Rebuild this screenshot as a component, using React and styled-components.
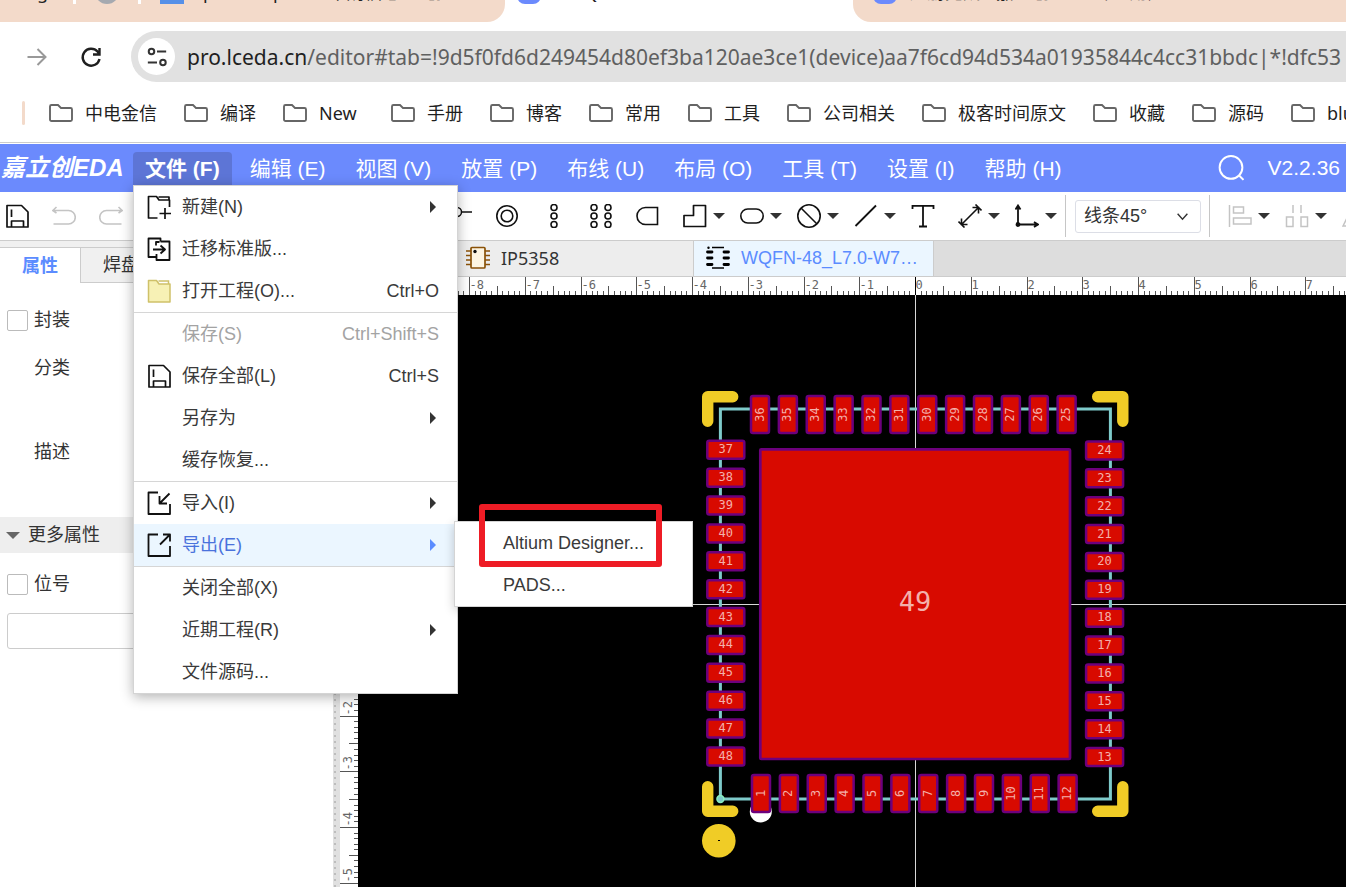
import React, { useEffect, useState } from 'react';
import styled, { createGlobalStyle, css } from 'styled-components';

const UI = '"Liberation Sans", "Noto Sans CJK SC", sans-serif';
const SYSTEM = '"Noto Sans", "Noto Sans CJK SC", sans-serif';

const Global = createGlobalStyle`
  *, *::before, *::after { box-sizing: border-box; }
  html, body, #root { height: 100%; }
  body { margin: 0; overflow: hidden; background: #fff; color: #333; font: 18px/24px ${UI}; }
  button { margin: 0; padding: 0; border: 0; background: none; color: inherit; font: inherit; text-align: left; }
  svg { display: block; flex: none; }
`;

const Page = styled.div`
  display: flex;
  flex-direction: column;
  height: 100vh;
  overflow: hidden;
`;

/* ---------- browser chrome ---------- */

const TabStrip = styled.div`
  display: flex;
  flex: none;
  height: 22px;
  overflow: hidden;
  font-family: ${SYSTEM};
  color: #222;
`;

const BrowserTab = styled.div`
  display: flex;
  align-items: flex-end;
  gap: ${(p) => p.$gap || '12px'};
  overflow: hidden;
  white-space: nowrap;
  padding: 0 0 18px ${(p) => p.$inset || '12px'};
  flex: ${(p) => p.$grow || '0 0 auto'};
  width: ${(p) => p.$width || 'auto'};
  background: ${(p) => (p.$active ? '#fff' : '#f3daca')};
  border-radius: ${(p) => p.$radius || '0'};
`;

const TabTitle = styled.span`
  line-height: 24px;
  text-align: ${(p) => (p.$width ? 'right' : 'left')};
  padding-right: ${(p) => (p.$width ? '6px' : '0')};
  width: ${(p) => p.$width || 'auto'};
`;

const TabMark = styled.span`
  width: ${(p) => p.$width || '24px'};
  height: 24px;
  flex: none;
  background: ${(p) => p.$color};
  border-radius: ${(p) => p.$round || '0'};
`;

const AddressBar = styled.div`
  display: flex;
  flex: none;
  align-items: center;
  gap: 26px;
  height: 69px;
  padding-left: 23px;
`;

const NavButton = styled.button`
  display: flex;
  justify-content: center;
  width: 28px;
  color: ${(p) => (p.$muted ? '#999' : '#1f1f1f')};
`;

const Omnibox = styled.div`
  display: flex;
  flex: 1;
  min-width: 0;
  align-items: center;
  gap: 12px;
  height: 51px;
  padding-left: 7px;
  border-radius: 26px 0 0 26px;
  background: #e1e1e1;
  overflow: hidden;
`;

const SiteInfo = styled.button`
  display: flex;
  flex: none;
  align-items: center;
  justify-content: center;
  width: 37px;
  height: 37px;
  border-radius: 50%;
  background: #fff;
`;

const Url = styled.div`
  flex: 1;
  font: 21px/28px ${SYSTEM};
  color: #5f6060;
  white-space: nowrap;
  b { color: #1f1f1f; font-weight: 400; }
`;

const Bookmarks = styled.nav`
  display: flex;
  flex: none;
  align-items: center;
  gap: 27px;
  height: 52px;
  padding: 0 0 8px 22px;
  border-bottom: 1px solid #ccc;
  margin-bottom: 1px;
  overflow: hidden;
  font-family: ${SYSTEM};
`;

const BookmarkBar = styled.span`
  flex: none;
  width: 3px;
  height: 24px;
  border-radius: 2px;
  background: #f3daca;
  margin-right: -3px;
`;

const Bookmark = styled.a`
  display: flex;
  flex: none;
  gap: 12px;
  align-items: center;
  color: #1f1f1f;
  text-decoration: none;
  span { min-width: 45px; }
  span:lang(zh) { min-width: 0; }
`;

/* ---------- application header ---------- */

const MenuBar = styled.header`
  display: flex;
  flex: none;
  align-items: center;
  height: 48px;
  padding-right: 6px;
  background: #6b8afd;
  color: #fff;
  font-size: 21px;
  position: relative;
  z-index: 5;
`;

const Logo = styled.div`
  width: 133px;
  padding-left: 1px;
  font: italic 700 24px/28px ${UI};
  white-space: nowrap;
`;

const MenuList = styled.nav`
  display: flex;
  gap: 6px;
  flex: 1;
`;

const MenuSlot = styled.div`
  position: relative;
`;

const MenuTitle = styled.button`
  height: 33px;
  padding: 0 12px;
  line-height: 33px;
  white-space: nowrap;
  border-radius: 4px 4px 0 0;
  ${(p) => p.$open && css`background: #5d75d6; font-weight: 700;`}
`;

const Version = styled.span`
  margin-left: 24px;
`;

const Dropdown = styled.div`
  position: absolute;
  top: 100%;
  left: 0;
  width: 325px;
  background: #fff;
  color: #333;
  border: 1px solid #d4d4d4;
  box-shadow: 0 3px 12px rgba(0, 0, 0, 0.3);
  font-size: 18px;
`;

const Divider = styled.div`
  height: 1px;
  background: #d6d6d6;
`;

const ItemSlot = styled.div`
  position: relative;
`;

const MenuItem = styled.button`
  display: flex;
  align-items: center;
  gap: 11px;
  width: 100%;
  height: 42px;
  padding: 0 18px 0 13px;
  white-space: nowrap;
  color: ${(p) => (p.$disabled ? '#a3a3a3' : p.$active ? '#4a72dc' : '#3a3a3a')};
  background: ${(p) => (p.$active ? '#ebf6ff' : 'transparent')};
`;

const IconSlot = styled.span`
  width: 24px;
  height: 24px;
  flex: none;
  color: #111;
`;

const ItemLabel = styled.span`
  flex: 1;
`;

const SubArrow = styled.span`
  margin-right: 3px;
  border: 6px solid transparent;
  border-left-color: ${(p) => (p.$active ? '#5b8cff' : '#333')};
  border-right-width: 0;
`;

const Submenu = styled.div`
  position: absolute;
  left: 320px;
  top: -3px;
  width: 239px;
  background: #fff;
  border: 1px solid #d4d4d4;
  box-shadow: 0 3px 10px rgba(0, 0, 0, 0.2);
`;

const Highlight = styled.div`
  position: absolute;
  left: 24px;
  top: -18px;
  width: 183px;
  height: 63px;
  border: 6px solid #ee1c25;
  border-radius: 3px;
  pointer-events: none;
`;

/* ---------- toolbar ---------- */

const Toolbar = styled.div`
  display: flex;
  flex: none;
  align-items: center;
  height: 49px;
  padding-left: 5px;
  border-bottom: 1px solid #ccc;
  overflow: hidden;
`;

const ToolGroup = styled.div`
  display: flex;
  flex: none;
  align-items: center;
  padding-left: ${(p) => p.$inset || '0'};
`;

const Tool = styled.button`
  display: flex;
  align-items: center;
  gap: 6px;
  margin-right: ${(p) => (p.$drop ? '15px' : '23px')};
  color: ${(p) => (p.$muted ? '#c4c4c4' : '#111')};
  ${(p) => p.$last && css`margin-right: 0;`}
`;

const Caret = styled.span`
  border: 6px solid transparent;
  border-top-color: #333;
  border-bottom-width: 0;
`;

const ToolRule = styled.span`
  flex: none;
  width: 1px;
  height: 42px;
  margin: 0 9px 0 8px;
  background: #c6c6c6;
`;

const SelectBox = styled.label`
  position: relative;
  display: block;
  flex: none;
  svg { position: absolute; right: 12px; top: 10px; pointer-events: none; }
`;

const Select = styled.select`
  appearance: none;
  width: 126px;
  height: 33px;
  padding: 0 8px;
  border: 1px solid #dcdee6;
  border-radius: 3px;
  background: #fff;
  color: #333;
  font: 18px/24px ${UI};
`;

/* ---------- workspace ---------- */

const Workspace = styled.div`
  display: flex;
  flex: 1;
  min-height: 0;
`;

const SidePanel = styled.aside`
  flex: none;
  width: 333px;
  padding-top: 6px;
  background: linear-gradient(#f0f0f0 6px, #fff 6px);
`;

const PanelTabs = styled.div`
  display: flex;
  height: 36px;
  border-top: 1px solid #ccc;
`;

const PanelTab = styled.button`
  padding: 0 22px;
  white-space: nowrap;
  ${(p) =>
    p.$active
      ? css`width: 81px; border-right: 1px solid #ccc; color: #5b8cff; font-weight: 700;`
      : css`flex: 1; background: #f0f0f0; border-bottom: 1px solid #ccc;`}
`;

const PanelBody = styled.div`
  padding-top: 13px;
`;

const Field = styled.div`
  display: flex;
  align-items: center;
  height: ${(p) => (p.$tall ? '120px' : '48px')};
  padding-left: ${(p) => (p.$indent ? '34px' : '7px')};
  label { display: flex; align-items: center; gap: 6px; }
`;

const Check = styled.input`
  appearance: none;
  width: 21px;
  height: 21px;
  margin: 0;
  border: 1px solid #bbb;
  border-radius: 2px;
  background: #fff;
`;

const Section = styled.button`
  display: flex;
  align-items: center;
  gap: 8px;
  width: 100%;
  height: 36px;
  margin: 5px 0 7px;
  padding-left: 6px;
  background: #eee;
`;

const SectionCaret = styled.span`
  border: 7px solid transparent;
  border-top-color: #666;
  border-bottom-width: 0;
`;

const TextBox = styled.input`
  display: block;
  width: 300px;
  height: 36px;
  margin: 5px 0 0 7px;
  border: 1px solid #ccc;
  border-radius: 3px;
`;

const Splitter = styled.div`
  flex: none;
  width: 7px;
  background: radial-gradient(circle at 2px 3px, #bdbdbd 1px, transparent 1px) 0 0 / 7px 6px #e0e0e0;
`;

const Editor = styled.main`
  flex: 1;
  min-width: 0;
  display: grid;
  grid-template-columns: 18px minmax(0, 1fr);
  grid-template-rows: 36px 18px minmax(0, 1fr);
`;

const DocTabs = styled.div`
  grid-column: 1 / -1;
  display: flex;
  background: #ddd;
  border-bottom: 1px solid #ccc;
`;

const DocTab = styled.button`
  display: flex;
  flex: none;
  align-items: center;
  gap: 11px;
  width: ${(p) => (p.$home ? '114px' : '240px')};
  padding: 0 12px 2px;
  border-right: 1px solid #ccc;
  background: ${(p) => (p.$active ? '#ebf6ff' : '#ededed')};
  color: ${(p) => (p.$active ? '#5b8cff' : '#333')};
  font-family: ${(p) => (p.$active ? UI : SYSTEM)};
  white-space: nowrap;
`;

const Corner = styled.div`
  background: #fff;
`;

const RulerSvg = styled.svg`
  width: 100%;
  height: 100%;
  background: #fff;
  text { font: 12px "DejaVu Sans Mono", monospace; fill: #666; }
`;

const Board = styled.svg`
  width: 100%;
  height: 100%;
  background: #000;
  text { font: 12px "DejaVu Sans Mono", monospace; fill: #f3b0ab; text-anchor: middle; }
  text.thermal { font-size: 27px; }
`;

/* ---------- icons ---------- */

const Icon = ({ children, w = 1.5, size = 24, ...rest }) => (
  <svg width={size} height={size} viewBox="0 0 24 24" fill="none" stroke="currentColor" strokeWidth={w} {...rest}>
    {children}
  </svg>
);

const SaveIcon = () => (
  <Icon w={1.7}>
    <path d="M2 1.5H16.500L23 8V23H2Z M6.500 5.500V13 M6.500 23V17H18.500V23" strokeLinejoin="round" />
  </Icon>
);
const UndoIcon = () => (
  <Icon w={1.6}><path d="M4.500 3L0.800 6.500L4.500 9 M1 6.500H16.500A6.700 6.700 0 0 1 16.500 20H1.500" /></Icon>
);
const RedoIcon = () => (
  <Icon w={1.6}><path d="M19.500 3L23.200 6.500L19.500 9 M23 6.500H7.500A6.700 6.700 0 0 0 7.500 20H22.500" /></Icon>
);
const ZoomIcon = () => (
  <Icon><circle cx="11" cy="11" r="8" /><path d="M17 17L22 22" /></Icon>
);
const PinIcon = () => (
  <Icon><circle cx="9" cy="8" r="4.500" /><path d="M13.500 8H24" /></Icon>
);
const PadIcon = () => (
  <Icon w={1.6}><circle cx="12" cy="12" r="10.200" /><circle cx="12" cy="12" r="5.800" /></Icon>
);
const ColumnIcon = () => (
  <Icon w={1.6}><circle cx="12" cy="3.500" r="3" /><circle cx="12" cy="12" r="3" /><circle cx="12" cy="20.500" r="3" /></Icon>
);
const GridPadIcon = () => (
  <Icon w={1.6}>
    {[5, 19].map((x) => [3.5, 12, 20.5].map((y) => <circle key={`${x}-${y}`} cx={x} cy={y} r="3" />))}
  </Icon>
);
const RegionIcon = () => (
  <Icon w={1.6}><path d="M21.500 3.500H9.500A8.500 8.500 0 0 0 9.500 20.500H21.500Z" /></Icon>
);
const PolyIcon = () => (
  <Icon w={1.7}><path d="M1 22.500V11.500H10.500V1.500H22.500V22.500Z" strokeLinejoin="round" /></Icon>
);
const OvalIcon = () => (
  <Icon w={1.6}><rect x="0.800" y="5" width="22.400" height="14" rx="7" /></Icon>
);
const ForbidIcon = () => (
  <Icon w={1.6}><circle cx="12" cy="12" r="11.200" /><path d="M4 4L20 20" /></Icon>
);
const LineIcon = () => (
  <Icon w={1.8}><path d="M1.500 22L22 1.500" /></Icon>
);
const TextIcon = () => (
  <Icon w={1.8}><path d="M1.500 5V1.800H22.500V5 M12 2V22.500 M8 22.500H16" /></Icon>
);
const DimensionIcon = () => (
  <Icon w={1.6}>
    <path d="M3 21L21 3 M14.500 3.500L20.500 3.500L20.500 9.500 M9.500 20.500H3.500V14.500 M17.500 0.500L23.500 6.500 M0.500 17.500L6.500 23.500" />
  </Icon>
);
const AxisIcon = () => (
  <Icon w={1.8}>
    <path d="M3 21V2 M0.500 5.500L3 1.500L5.500 5.500 M3 20.500H22 M19 18L23 20.500L19 23" />
    <circle cx="3" cy="20.500" r="1.500" fill="currentColor" />
  </Icon>
);
const AlignIcon = () => (
  <Icon>
    <path d="M1.500 1V23" />
    <rect x="5.500" y="3" width="10" height="6" />
    <rect x="5.500" y="14" width="17.500" height="6" />
  </Icon>
);
const DistributeIcon = () => (
  <Icon>
    <path d="M8 1V9 M16 1V9" />
    <rect x="1.500" y="13" width="6.500" height="9.500" />
    <rect x="16" y="13" width="6.500" height="9.500" />
  </Icon>
);
const MirrorIcon = () => (
  <Icon><path d="M1 22L11 2V22Z" /></Icon>
);
const NewIcon = () => (
  <Icon w={1.7}>
    <path d="M10.500 23H1.500V1.500H9.500L12 5H22.500V12 M11.500 2H22V5 M18 13V24 M12.500 18.500H24" strokeLinejoin="round" />
  </Icon>
);
const MigrateIcon = () => (
  <Icon w={1.8}>
    <path d="M13.500 4.500V1.500H1.500V20H9 M9 8.500V5H12.500M13.500 4.500H22.500V23H9.500V17 M6 12.500H17.500 M13.500 8.500L18 12.500L13.500 16.500" strokeLinejoin="round" />
  </Icon>
);
const OpenIcon = () => (
  <Icon>
    <path d="M1.500 1.500H9.500L12 5H23V23H1.500Z" fill="#f7f1b5" stroke="#cfc169" strokeLinejoin="round" />
    <path d="M11.500 2H21.500V5" stroke="#cfc169" />
  </Icon>
);
const ImportIcon = () => (
  <Icon w={1.8}>
    <path d="M11 1.500H1.500V23H23V13 M22.500 2.500L13 12 M12.500 5V12.500H20" strokeLinejoin="round" />
  </Icon>
);
const ExportIcon = () => (
  <Icon w={1.8}>
    <path d="M11 1.500H1.500V23H23V13 M13 11.500L22.500 2 M16 1.500H23V8.500" strokeLinejoin="round" />
  </Icon>
);
const FolderIcon = () => (
  <svg width="24" height="18" viewBox="0 0 24 18" fill="none" stroke="#666" strokeWidth="1.900">
    <path d="M2.500 1H9L12 4H21.500A1.500 1.500 0 0 1 23 5.500V15.500A1.500 1.500 0 0 1 21.500 17H2.500A1.500 1.500 0 0 1 1 15.500V2.500A1.500 1.500 0 0 1 2.500 1Z" />
  </svg>
);
const ChipIcon = () => (
  <Icon stroke="#8a5208" w={1.7}>
    <rect x="5" y="1.500" width="14" height="20.500" rx="1" fill="#fdf5e2" />
    <path d="M0 5H5 M0 9.500H5 M0 14H5 M0 18.500H5 M19 5H24 M19 9.500H24 M19 14H24 M19 18.500H24" />
    <circle cx="9" cy="5.500" r="1.700" fill="#111" stroke="none" />
  </Icon>
);
const FootprintIcon = () => (
  <Icon stroke="#000">
    <path d="M6 1.500H18 M6 22H18" />
    <path d="M1.500 6H6 M1.500 12H6 M1.500 18.500H6 M18 6H22.500 M18 12H22.500 M18 18.500H22.500" strokeWidth="2.800" strokeLinecap="round" />
    <circle cx="2.500" cy="1.800" r="1.200" fill="#000" stroke="none" />
  </Icon>
);

/* ---------- data ---------- */

const bookmarks = ['中电金信', '编译', 'New', '手册', '博客', '常用', '工具', '公司相关', '极客时间原文', '收藏', '源码', 'blue'];

const menus = ['编辑 (E)', '视图 (V)', '放置 (P)', '布线 (U)', '布局 (O)', '工具 (T)', '设置 (I)', '帮助 (H)'];

const fileMenu = [
  [
    { label: '新建(N)', icon: NewIcon, sub: true },
    { label: '迁移标准版...', icon: MigrateIcon },
    { label: '打开工程(O)...', icon: OpenIcon, keys: 'Ctrl+O' },
  ],
  [
    { label: '保存(S)', keys: 'Ctrl+Shift+S', disabled: true },
    { label: '保存全部(L)', icon: SaveIcon, keys: 'Ctrl+S' },
    { label: '另存为', sub: true },
    { label: '缓存恢复...' },
  ],
  [
    { label: '导入(I)', icon: ImportIcon, sub: true },
    { label: '导出(E)', icon: ExportIcon, sub: true, active: true, children: ['Altium Designer...', 'PADS...'] },
  ],
  [{ label: '关闭全部(X)' }, { label: '近期工程(R)', sub: true }, { label: '文件源码...' }],
];

const tools = [
  { name: '保存', icon: SaveIcon },
  { name: '撤销', icon: UndoIcon, muted: true },
  { name: '重做', icon: RedoIcon, muted: true },
  { name: '缩放', icon: ZoomIcon },
  { name: '选择', icon: ZoomIcon },
  { name: '视图', icon: ZoomIcon },
  { name: '查找', icon: ZoomIcon },
  { name: '网格', icon: ZoomIcon, drop: true },
  { name: '单位', icon: ZoomIcon, drop: true },
  { name: '引脚', icon: PinIcon },
  { name: '焊盘', icon: PadIcon },
  { name: '单列焊盘', icon: ColumnIcon },
  { name: '双列焊盘', icon: GridPadIcon },
  { name: '槽形', icon: RegionIcon },
  { name: '多边形', icon: PolyIcon, drop: true },
  { name: '椭圆', icon: OvalIcon, drop: true },
  { name: '禁止区域', icon: ForbidIcon, drop: true },
  { name: '线条', icon: LineIcon, drop: true },
  { name: '文本', icon: TextIcon },
  { name: '尺寸', icon: DimensionIcon, drop: true },
  { name: '原点', icon: AxisIcon, drop: true, last: true },
];

const alignTools = [
  { name: '对齐', icon: AlignIcon, drop: true, muted: true },
  { name: '分布', icon: DistributeIcon, drop: true, muted: true },
  { name: '翻转', icon: MirrorIcon, muted: true },
];

/* Pixels per ruler unit, and the drawing origin inside the canvas. */
const UNIT = 55.75;
const ORIGIN = { x: 557.5, y: 309.5 };
const PITCH = UNIT / 2;
/* Where the canvas starts in the window. */
const CANVAS = { x: 358, y: 295 };

/* ---------- pieces ---------- */

function useWindowSize() {
  const read = () => ({ width: window.innerWidth, height: window.innerHeight });
  const [size, setSize] = useState(read);
  useEffect(() => {
    const update = () => setSize(read());
    window.addEventListener('resize', update);
    return () => window.removeEventListener('resize', update);
  }, []);
  return size;
}

function ToolButton({ name, icon: Glyph, drop, muted, last }) {
  return (
    <Tool type="button" aria-label={name} $drop={drop} $muted={muted} $last={last}>
      <Glyph />
      {drop && <Caret />}
    </Tool>
  );
}

function FileMenu() {
  return (
    <Dropdown>
      {fileMenu.map((group, g) => (
        <React.Fragment key={g}>
          {g > 0 && <Divider />}
          {group.map((item) => (
            <ItemSlot key={item.label}>
              <MenuItem type="button" $active={item.active} $disabled={item.disabled}>
                <IconSlot>{item.icon && <item.icon />}</IconSlot>
                <ItemLabel>{item.label}</ItemLabel>
                {item.keys && <span>{item.keys}</span>}
                {item.sub && <SubArrow $active={item.active} />}
              </MenuItem>
              {item.children && (
                <Submenu>
                  {item.children.map((c) => (
                    <MenuItem key={c} type="button">
                      <IconSlot />
                      <ItemLabel>{c}</ItemLabel>
                    </MenuItem>
                  ))}
                  <Highlight />
                </Submenu>
              )}
            </ItemSlot>
          ))}
        </React.Fragment>
      ))}
    </Dropdown>
  );
}

const tickSize = (i) => (i % 10 === 0 ? 18 : i % 5 === 0 ? 9 : 4);

function Ruler({ vertical }) {
  const { width, height } = useWindowSize();
  const origin = vertical ? ORIGIN.y : ORIGIN.x;
  const length = vertical ? height - CANVAS.y : width - CANVAS.x;
  const first = Math.ceil((-origin * 10) / UNIT);
  const last = Math.floor(((length - origin) * 10) / UNIT);
  const ticks = [];
  for (let i = first; i <= last; i += 1) {
    const p = Math.floor(origin + (i * UNIT) / 10) + 0.5;
    const n = tickSize(i);
    const value = vertical ? -i / 10 : i / 10;
    ticks.push(
      <g key={i}>
        <path d={vertical ? `M18 ${p}H${18 - n}` : `M${p} 18V${18 - n}`} stroke={i === 0 ? '#000' : '#555'} />
        {i % 10 === 0 && (vertical
          ? <text transform={`translate(12 ${p - 1}) rotate(-90)`}>{value}</text>
          : <text x={p} y="12">{value}</text>)}
      </g>
    );
  }
  return <RulerSvg aria-hidden="true">{ticks}</RulerSvg>;
}

function Pad({ cx, cy, n, upright }) {
  const w = upright ? 20 : 39;
  const h = upright ? 39 : 20;
  return (
    <g>
      <rect x={cx - w / 2 + 1} y={cy - h / 2 + 1} width={w - 2} height={h - 2} rx="2" fill="#d80a00" stroke="#6d007d" strokeWidth="2.500" />
      {upright
        ? <text transform={`translate(${cx + 3.5} ${cy}) rotate(-90)`}>{n}</text>
        : <text x={cx} y={cy + 3.5}>{n}</text>}
    </g>
  );
}

function Footprint() {
  const pads = [];
  for (let i = 0; i < 12; i += 1) {
    pads.push(
      <Pad key={36 - i} n={36 - i} cx={402 + i * PITCH} cy={119.5} upright />,
      <Pad key={1 + i} n={1 + i} cx={403 + i * PITCH} cy={498.5} upright />,
      <Pad key={37 + i} n={37 + i} cx={367.8} cy={154.8 + i * PITCH} />,
      <Pad key={24 - i} n={24 - i} cx={746.6} cy={155.4 + i * PITCH} />
    );
  }
  return (
    <Board role="img" aria-label="WQFN-48">
      <path d={`M${ORIGIN.x} 0V2000 M0 ${ORIGIN.y}H3000`} stroke="#d8d8d8" />
      <rect x="362.400" y="114" width="390" height="390" fill="none" stroke="#7ecaca" strokeWidth="3" />
      <g fill="none" stroke="#f0cc26" strokeWidth="11.400" strokeLinecap="round" strokeLinejoin="round">
        <path d="M349.700 126.300V101.700H374.700" />
        <path d="M739.700 101.700H764.800V126.300" />
        <path d="M349.700 491.700V516.300H374.700" />
        <path d="M739.700 516.300H764.800V491.700" />
      </g>
      <circle cx="360.800" cy="545.700" r="16.800" fill="#f0cc26" />
      <path d="M360 545.500H362" stroke="#000" />
      <circle cx="362.400" cy="504" r="4.200" fill="#8af0c0" />
      <circle cx="362.400" cy="504" r="2.800" fill="#7ecaca" />
      <circle cx="402.800" cy="516.500" r="11" fill="#fff" />
      <rect x="402.300" y="154.300" width="309.700" height="309.700" rx="1" fill="#d80a00" stroke="#6d007d" strokeWidth="2.700" />
      <text className="thermal" x="557" y="316">49</text>
      {pads}
    </Board>
  );
}

export default function App() {
  return (
    <Page>
      <Global />
      <TabStrip>
        <BrowserTab $width="505px" $radius="0 0 18px 0" $gap="19px">
          <TabTitle $width="42px">g</TabTitle>
          <TabMark $width="3px" $color="#fff" />
          <TabMark $color="#a5a9b0" $round="50%" />
          <TabMark $width="3px" $color="#fff" />
          <TabMark $color="#5690e8" />
          <TabTitle>pcb footprint - 采购信心-立创</TabTitle>
        </BrowserTab>
        <BrowserTab $active $width="348px">
          <TabMark $color="#6b8afd" $round="8px" />
          <TabTitle>* WQFN</TabTitle>
        </BrowserTab>
        <BrowserTab $grow="1" $width="0" $radius="0 0 0 18px" $inset="20px">
          <TabMark $color="#6b8afd" $round="8px" />
          <TabTitle>注册完成 - 嘉立创 EDA 专业用户</TabTitle>
        </BrowserTab>
      </TabStrip>

      <AddressBar>
        <NavButton type="button" aria-label="前进" $muted>
          <Icon w={2}><path d="M2.500 12H20.500 M12.500 4L20.500 12L12.500 20" /></Icon>
        </NavButton>
        <NavButton type="button" aria-label="刷新">
          <Icon w={2.4}><path d="M20.500 14A8.500 8.500 0 1 1 18.500 6.500L20.500 9 M20.500 3V9.500H14" /></Icon>
        </NavButton>
        <Omnibox>
          <SiteInfo type="button" aria-label="网站信息">
            <Icon w={2.2} size={22}>
              <circle cx="6" cy="6" r="3" /><path d="M12 6H22 M2 18H12" /><circle cx="18.500" cy="18" r="3" />
            </Icon>
          </SiteInfo>
          <Url>
            <b>pro.lceda.cn</b>/editor#tab=!9d5f0fd6d249454d80ef3ba120ae3ce1(device)aa7f6cd94d534a01935844c4cc31bbdc|*!dfc53
          </Url>
        </Omnibox>
      </AddressBar>

      <Bookmarks>
        <BookmarkBar />
        {bookmarks.map((b) => (
          <Bookmark key={b} href="#">
            <FolderIcon />
            <span lang={/^[A-Za-z]/.test(b) ? 'en' : 'zh'}>{b}</span>
          </Bookmark>
        ))}
      </Bookmarks>

      <MenuBar>
        <Logo>嘉立创EDA</Logo>
        <MenuList>
          <MenuSlot>
            <MenuTitle type="button" $open>文件 (F)</MenuTitle>
            <FileMenu />
          </MenuSlot>
          {menus.map((m) => (
            <MenuTitle key={m} type="button">{m}</MenuTitle>
          ))}
        </MenuList>
        <Icon w={1.8} size={26}><circle cx="12" cy="11.500" r="10.500" /><path d="M19 18.500L23.500 23" /></Icon>
        <Version>V2.2.36</Version>
      </MenuBar>

      <Toolbar>
        <ToolGroup>{tools.map((t) => <ToolButton key={t.name} {...t} />)}</ToolGroup>
        <ToolRule />
        <SelectBox>
          <Select aria-label="布线角度" defaultValue="45">
            <option value="45">线条45°</option>
            <option value="90">线条90°</option>
          </Select>
          <Icon size={13} w={2.6}><path d="M3 7L12 17L21 7" /></Icon>
        </SelectBox>
        <ToolRule />
        <ToolGroup $inset="9px">{alignTools.map((t) => <ToolButton key={t.name} {...t} />)}</ToolGroup>
      </Toolbar>

      <Workspace>
        <SidePanel>
          <PanelTabs>
            <PanelTab type="button" $active>属性</PanelTab>
            <PanelTab type="button">焊盘</PanelTab>
          </PanelTabs>
          <PanelBody>
            <Field><label><Check type="checkbox" />封装</label></Field>
            <Field $indent>分类</Field>
            <Field $indent $tall>描述</Field>
            <Section type="button"><SectionCaret />更多属性</Section>
            <Field><label><Check type="checkbox" />位号</label></Field>
            <TextBox type="text" aria-label="位号" />
          </PanelBody>
        </SidePanel>
        <Splitter />
        <Editor>
          <DocTabs>
            <DocTab type="button" $home aria-label="首页"><ChipIcon /></DocTab>
            <DocTab type="button"><ChipIcon />IP5358</DocTab>
            <DocTab type="button" $active><FootprintIcon />WQFN-48_L7.0-W7…</DocTab>
          </DocTabs>
          <Corner />
          <Ruler />
          <Ruler vertical />
          <Footprint />
        </Editor>
      </Workspace>
    </Page>
  );
}
